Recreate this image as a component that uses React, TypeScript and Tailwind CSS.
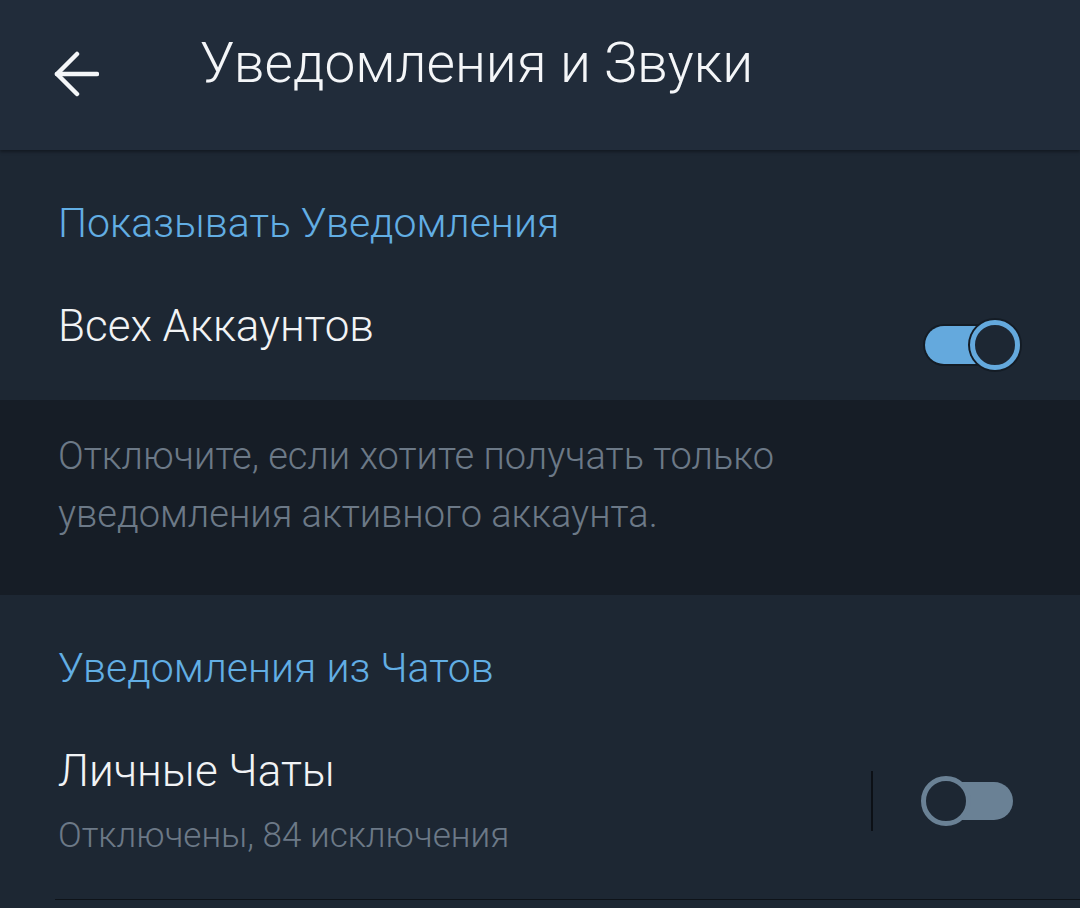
import React from "react";

function BackArrow() {
  return (
    <svg width="46" height="46" viewBox="0 0 46 46" fill="none" className="shrink-0">
      <path d="M4 23H44" stroke="#f4f6f8" strokeWidth="4.5" strokeLinecap="round" />
      <path d="M24 3L4 23L24 43" stroke="#f4f6f8" strokeWidth="4.5" strokeLinecap="round" strokeLinejoin="round" />
    </svg>
  );
}

function Toggle({ on }: { on: boolean }) {
  if (on) {
    return (
      <div className="relative w-[95px] h-[50px] shrink-0">
        <div className="absolute left-0 top-[6px] h-[38px] w-[80px] rounded-full bg-[#64a9dd] shadow-[0_0_0_2px_#141c25]" />
        <div className="absolute right-0 top-0 w-[50px] h-[50px] rounded-full border-[5px] border-[#64a9dd] bg-[#1d2733] shadow-[0_0_0_2px_#141c25]" />
      </div>
    );
  }
  return (
    <div className="relative w-[92px] h-[50px] shrink-0">
      <div className="absolute right-0 top-[6px] h-[38px] w-[80px] rounded-full bg-[#6a8195]" />
      <div className="absolute left-0 top-0 w-[50px] h-[50px] rounded-full border-[5px] border-[#6a8195] bg-[#1d2733]" />
    </div>
  );
}

export default function App() {
  return (
    <div className="w-[1080px] h-[908px] overflow-hidden bg-[#1d2733] font-['Roboto','Noto_Sans',sans-serif] font-light">
      <header className="h-[150px] bg-[#212c3a] flex items-start shadow-[0_2px_3px_rgba(0,0,0,0.35)] relative z-10">
        <div className="ml-[53px] mt-[51px]">
          <BackArrow />
        </div>
        <h1 className="ml-[101px] mt-[36px] text-[55px] leading-[55px] text-[#f4f6f8] font-light">
          Уведомления и Звуки
        </h1>
      </header>

      <section className="h-[250px] pl-[58px] pt-[53px]">
        <div className="text-[41px] leading-[41px] text-[#62aee4]">Показывать Уведомления</div>
        <div className="mt-[60px] flex items-start justify-between pr-[60px]">
          <span className="text-[44px] leading-[44px] text-[#f1f3f5]">Всех Аккаунтов</span>
          <div className="mt-[16px]">
            <Toggle on />
          </div>
        </div>
      </section>

      <section className="h-[195px] bg-[#161d26] pl-[58px] pt-[27px]">
        <p className="max-w-[900px] text-[38px] leading-[58px] text-[#6c7987]">
          Отключите, если хотите получать только уведомления активного аккаунта.
        </p>
      </section>

      <section className="pt-[53px]">
        <div className="pl-[58px] text-[41px] leading-[41px] text-[#62aee4]">Уведомления из Чатов</div>
        <div className="mt-[60px] flex items-center pl-[58px] pr-[67px]">
          <div className="flex flex-col">
            <span className="text-[44px] leading-[44px] text-[#f1f3f5]">Личные Чаты</span>
            <span className="mt-[25px] text-[35px] leading-[35px] text-[#6c7987]">
              Отключены, 84 исключения
            </span>
          </div>
          <div className="ml-auto w-[2px] h-[60px] bg-[#0c1016]" />
          <div className="ml-[48px]">
            <Toggle on={false} />
          </div>
        </div>
        <div className="ml-[55px] mt-[46px] h-px bg-[#0e1319]" />
      </section>
    </div>
  );
}
